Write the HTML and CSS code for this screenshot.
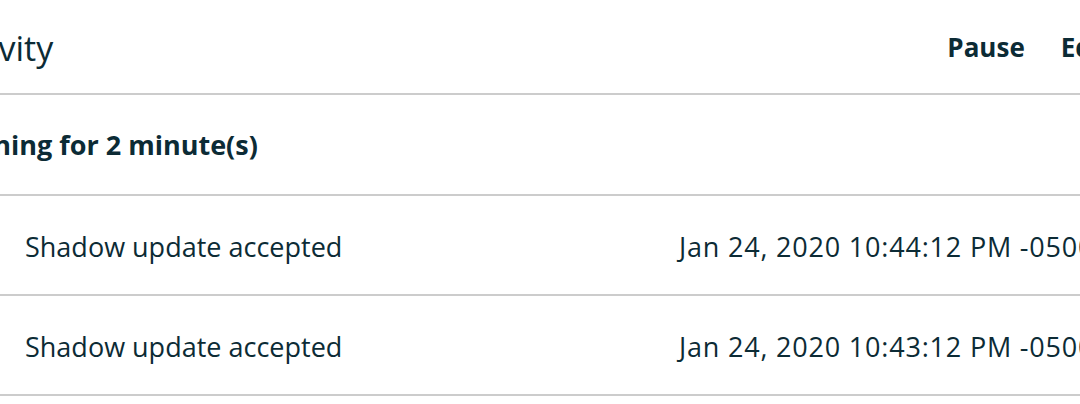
FILE: index.html
```html
<!DOCTYPE html>
<html>
<head>
  <title>Activity</title>
  <link rel="stylesheet" href="styles.css">
</head>
<body>
  <div class="panel">
    <div class="panel-header">
      <h2>Activity</h2>
      <div class="actions">
        <button class="link-btn">Pause</button>
        <button class="link-btn">Edit</button>
      </div>
    </div>

    <div class="status">Running for 2 minute(s)</div>

    <div class="event-list">
      <div class="event">
        <span class="event-name">Shadow update accepted</span>
        <span class="event-time">Jan 24, 2020 10:44:12 PM -0500</span>
      </div>
      <div class="event">
        <span class="event-name">Shadow update accepted</span>
        <span class="event-time">Jan 24, 2020 10:43:12 PM -0500</span>
      </div>
    </div>
  </div>
</body>
</html>
```

FILE: styles.css
```css
body {
  margin: 0;
  padding: 0;
  background: #fff;
  font-family: 'Open Sans', sans-serif;
  color: #0c2b35;
  overflow: hidden;
}
.panel {
  margin-left: -60px;
  width: 1171px;
}
.panel-header {
  display: flex;
  align-items: center;
  justify-content: space-between;
  height: 93px;
  border-bottom: 2px solid #cccccc;
}
.panel-header h2 {
  margin: 2px 0 0;
  font-size: 34px;
  font-weight: normal;
}
.actions {
  display: flex;
  gap: 36px;
}
.link-btn {
  background: none;
  border: none;
  padding: 0;
  font-family: inherit;
  font-size: 26px;
  font-weight: bold;
  color: #0c2b35;
  cursor: pointer;
}
.status {
  display: flex;
  align-items: center;
  height: 99px;
  border-bottom: 2px solid #cccccc;
  font-size: 27px;
  font-weight: bold;
}
.event {
  display: flex;
  align-items: center;
  height: 98px;
  border-bottom: 2px solid #cccccc;
  font-size: 27px;
  white-space: nowrap;
}
.event-name {
  flex: none;
  width: 654px;
  padding-left: 85px;
  padding-top: 3px;
}
.event-time {
  padding-top: 3px;
  letter-spacing: 0.8px;
}
```
